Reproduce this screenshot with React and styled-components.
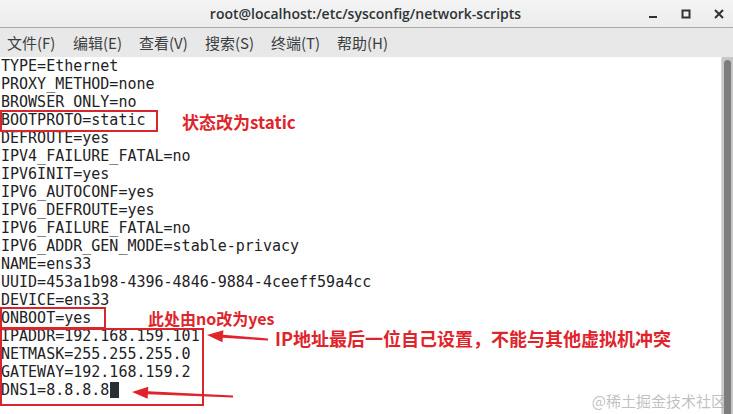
import React from "react";
import styled, { createGlobalStyle } from "styled-components";

const Global = createGlobalStyle`
  html, body { margin: 0; padding: 0; background: #ffffff; }
  body { width: 733px; height: 414px; overflow: hidden; }
  #root { width: 733px; height: 414px; }
`;

const Window = styled.div`
  width: 733px;
  height: 414px;
  display: flex;
  flex-direction: column;
  background: #fff;
  overflow: hidden;
`;

const TitleBar = styled.div`
  height: 27px;
  flex: none;
  background: linear-gradient(#f4f4f4, #ececec);
  border-bottom: 1px solid #a8a8a8;
  display: flex;
  align-items: center;
  justify-content: center;
  position: relative;
`;

const Title = styled.div`
  font-family: "Open Sans", "Noto Sans", sans-serif;
  font-weight: 600;
  font-size: 14px;
  color: #2e3436;
  margin-left: -2px;
`;

const Controls = styled.div`
  position: absolute;
  right: 9px;
  top: 0;
  height: 27px;
  display: flex;
  align-items: center;
  gap: 23px;
`;

const Ctrl = styled.svg`
  width: 10px;
  height: 10px;
  display: block;
`;

const MenuBar = styled.div`
  height: 29px;
  flex: none;
  background: #e8e8e8;
  display: flex;
  align-items: center;
  padding-left: 7px;
  gap: 16px;
`;

const MenuItem = styled.span`
  font-family: "Noto Sans CJK SC", "Noto Sans", sans-serif;
  font-size: 15px;
  color: #3a3f41;
  width: 50px;
  white-space: nowrap;
`;

const Terminal = styled.div`
  flex: 1;
  display: flex;
  min-height: 0;
  position: relative;
`;

const Content = styled.div`
  flex: 1;
  position: relative;
  padding-left: 1px;
`;

const Line = styled.div`
  font-family: "DejaVu Sans Mono", "Liberation Mono", monospace;
  font-size: 15px;
  line-height: 18px;
  height: 18px;
  color: #1e2224;
  white-space: pre;
`;

const Cursor = styled.span`
  display: inline-block;
  width: 9px;
  height: 16px;
  background: #2b2f31;
  vertical-align: -3px;
  margin-left: 1px;
`;

const Scrollbar = styled.div`
  width: 12px;
  flex: none;
  background: #c8c8c8;
  border-left: 1px solid #d8d8d8;
  padding: 3px 2px 0 2px;
  box-sizing: border-box;
  display: flex;
`;

const Thumb = styled.div`
  flex: 1;
  background: #7d7d7d;
  border-radius: 4px 4px 0 0;
`;

const Box = styled.div`
  position: absolute;
  border: 2px solid #d9262c;
  box-sizing: border-box;
  pointer-events: none;
`;

const Note = styled.div`
  position: absolute;
  font-family: "Noto Sans CJK SC", "Noto Sans", sans-serif;
  font-weight: 700;
  font-size: ${(p) => p.$size || 16}px;
  line-height: 1;
  color: #e0242b;
  white-space: nowrap;
  transform: translateY(-50%);
`;

const ArrowSvg = styled.svg`
  position: absolute;
  left: 0;
  top: 0;
  overflow: visible;
  pointer-events: none;
`;

const Watermark = styled.div`
  position: absolute;
  right: 7px;
  bottom: 3px;
  font-family: "Noto Sans CJK SC", "Noto Sans", sans-serif;
  font-size: 15px;
  color: rgba(150, 150, 150, 0.6);
  white-space: nowrap;
  pointer-events: none;
`;

const lines = [
  "TYPE=Ethernet",
  "PROXY_METHOD=none",
  "BROWSER_ONLY=no",
  "BOOTPROTO=static",
  "DEFROUTE=yes",
  "IPV4_FAILURE_FATAL=no",
  "IPV6INIT=yes",
  "IPV6_AUTOCONF=yes",
  "IPV6_DEFROUTE=yes",
  "IPV6_FAILURE_FATAL=no",
  "IPV6_ADDR_GEN_MODE=stable-privacy",
  "NAME=ens33",
  "UUID=453a1b98-4396-4846-9884-4ceeff59a4cc",
  "DEVICE=ens33",
  "ONBOOT=yes",
  "IPADDR=192.168.159.101",
  "NETMASK=255.255.255.0",
  "GATEWAY=192.168.159.2",
];

const menus = ["文件(F)", "编辑(E)", "查看(V)", "搜索(S)", "终端(T)", "帮助(H)"];

function Arrow({ x1, y1, x2, y2 }) {
  const dx = x2 - x1;
  const dy = y2 - y1;
  const len = Math.hypot(dx, dy);
  const ux = dx / len;
  const uy = dy / len;
  const nx = -uy;
  const ny = ux;
  const head = 16;
  const hw = 6;
  const bx = x1 + ux * head;
  const by = y1 + uy * head;
  const pts = [
    [x1, y1],
    [bx + nx * hw, by + ny * hw],
    [bx + nx * 1.5, by + ny * 1.5],
    [x2, y2 + 0.5],
    [x2, y2 - 1.5],
    [bx - nx * 1.5, by - ny * 1.5],
    [bx - nx * hw, by - ny * hw],
  ];
  return <polygon points={pts.map((p) => p.join(",")).join(" ")} fill="#e0242b" />;
}

function WinCtrl({ kind }) {
  if (kind === "min")
    return (
      <Ctrl viewBox="0 0 10 10">
        <rect x="1" y="7" width="8" height="2" fill="#2e3436" />
      </Ctrl>
    );
  if (kind === "max")
    return (
      <Ctrl viewBox="0 0 10 10">
        <rect x="1.5" y="1.5" width="7" height="7" fill="none" stroke="#2e3436" strokeWidth="2" />
      </Ctrl>
    );
  return (
    <Ctrl viewBox="0 0 10 10">
      <path d="M1 1 L9 9 M9 1 L1 9" stroke="#2e3436" strokeWidth="2" />
    </Ctrl>
  );
}

export default function App() {
  return (
    <>
      <Global />
      <Window>
        <TitleBar>
          <Title>root@localhost:/etc/sysconfig/network-scripts</Title>
          <Controls>
            <WinCtrl kind="min" />
            <WinCtrl kind="max" />
            <WinCtrl kind="close" />
          </Controls>
        </TitleBar>
        <MenuBar>
          {menus.map((m) => (
            <MenuItem key={m}>{m}</MenuItem>
          ))}
        </MenuBar>
        <Terminal>
          <Content>
            {lines.map((l, i) => (
              <Line key={i}>{l}</Line>
            ))}
            <Line>
              DNS1=8.8.8.8<Cursor />
            </Line>

            <Box style={{ left: 0, top: 53, width: 158, height: 22 }} />
            <Box style={{ left: 0, top: 250, width: 106, height: 22 }} />
            <Box style={{ left: 0, top: 271, width: 204, height: 78 }} />

            <Note $size={17} style={{ left: 182, top: 64 }}>状态改为static</Note>
            <Note style={{ left: 148, top: 261 }}>此处由no改为yes</Note>
            <Note $size={18} style={{ left: 275, top: 281 }}>
              IP地址最后一位自己设置，不能与其他虚拟机冲突
            </Note>

            <ArrowSvg width="720" height="357">
              <Arrow x1={207} y1={278} x2={268} y2={283} />
              <Arrow x1={132} y1={335} x2={233} y2={340} />
            </ArrowSvg>
          </Content>
          <Scrollbar>
            <Thumb />
          </Scrollbar>
          <Watermark>@稀土掘金技术社区</Watermark>
        </Terminal>
      </Window>
    </>
  );
}
